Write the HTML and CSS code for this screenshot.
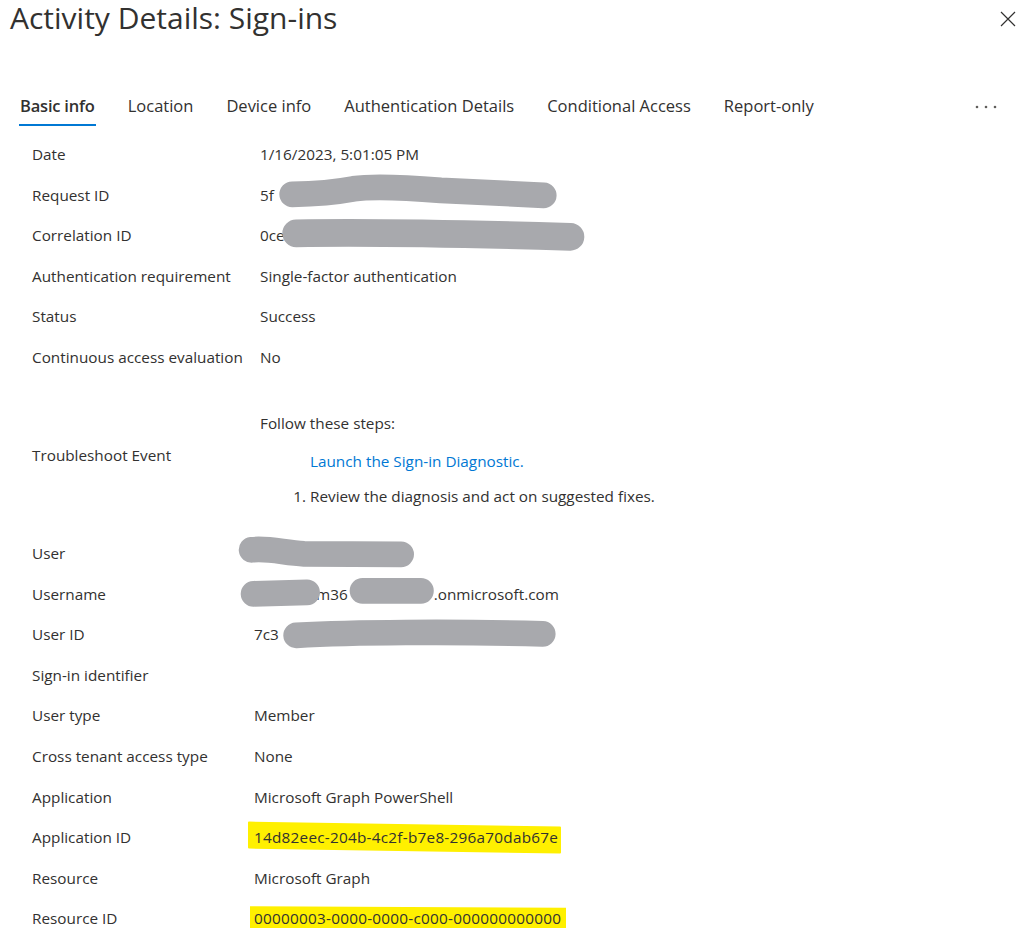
FILE: index.html
```html
<!DOCTYPE html>
<html lang="en">
<head>
<meta charset="utf-8">
<title>Activity Details: Sign-ins</title>
<link rel="stylesheet" href="styles.css">
</head>
<body>
<header class="header">
  <h1 class="title">Activity Details: Sign-ins</h1>
  <button class="close" aria-label="Close">
    <svg width="16" height="16" viewBox="0 0 16 16"><path d="M1 1 L15 15 M15 1 L1 15" stroke="#323130" stroke-width="1.2" fill="none"/></svg>
  </button>
</header>

<nav class="tabs">
  <span class="tab active">Basic info</span>
  <span class="tab">Location</span>
  <span class="tab">Device info</span>
  <span class="tab">Authentication Details</span>
  <span class="tab">Conditional Access</span>
  <span class="tab">Report-only</span>
  <span class="more" aria-label="More">
    <svg width="22" height="4" viewBox="0 0 22 4"><circle cx="2" cy="2" r="1.3" fill="#605e5c"/><circle cx="11" cy="2" r="1.3" fill="#605e5c"/><circle cx="20" cy="2" r="1.3" fill="#605e5c"/></svg>
  </span>
</nav>

<section class="details sec1">
  <div class="row"><div class="label">Date</div><div class="value">1/16/2023, 5:01:05 PM</div></div>
  <div class="row"><div class="label">Request ID</div><div class="value">5f</div>
    <svg class="blob" viewBox="0 0 1028 41"><path d="M290 20.5 C320 20 336 18 352 15 C372 12 402 13.5 440 16.5 L544 21.5"/></svg>
  </div>
  <div class="row"><div class="label">Correlation ID</div><div class="value">0ce</div>
    <svg class="blob wide" viewBox="0 0 1028 41"><path d="M294 18.5 C350 17.5 450 18.5 571 22"/></svg>
  </div>
  <div class="row"><div class="label">Authentication requirement</div><div class="value">Single-factor authentication</div></div>
  <div class="row"><div class="label">Status</div><div class="value">Success</div></div>
  <div class="row"><div class="label">Continuous access evaluation</div><div class="value">No</div></div>
  <div class="row trouble">
    <div class="label">Troubleshoot Event</div>
    <div class="value steps">
      <div class="steps-title">Follow these steps:</div>
      <a class="diag-link" href="#">Launch the Sign-in Diagnostic.</a>
      <ol class="step-list"><li>Review the diagnosis and act on suggested fixes.</li></ol>
    </div>
  </div>
</section>

<section class="details sec2">
  <div class="row"><div class="label">User</div><div class="value"></div>
    <svg class="blob" viewBox="0 0 1028 41"><path d="M249 17 C266 15 282 20 302 21 L400 21.5"/></svg>
  </div>
  <div class="row"><div class="label">Username</div><div class="value"><span class="gap g1"></span>m36<span class="gap g2"></span>.onmicrosoft.com</div>
    <svg class="blob" viewBox="0 0 1028 41"><path d="M251 21 L305 19.5"/><path d="M361 18 L420 18"/></svg>
  </div>
  <div class="row"><div class="label">User ID</div><div class="value">7c3</div>
    <svg class="blob" viewBox="0 0 1028 41"><path d="M294 21.5 C350 18.5 450 17.5 543 20"/></svg>
  </div>
  <div class="row"><div class="label">Sign-in identifier</div><div class="value"></div></div>
  <div class="row"><div class="label">User type</div><div class="value">Member</div></div>
  <div class="row"><div class="label">Cross tenant access type</div><div class="value">None</div></div>
  <div class="row"><div class="label">Application</div><div class="value">Microsoft Graph PowerShell</div></div>
  <div class="row"><div class="label">Application ID</div><div class="value"><span class="hl hl-app">14d82eec-204b-4c2f-b7e8-296a70dab67e</span></div></div>
  <div class="row"><div class="label">Resource</div><div class="value">Microsoft Graph</div></div>
  <div class="row"><div class="label">Resource ID</div><div class="value"><span class="hl hl-res">00000003-0000-0000-c000-000000000000</span></div></div>
</section>
</body>
</html>
```

FILE: styles.css
```css
* { box-sizing: border-box; }

html, body {
  margin: 0;
  padding: 0;
  background: #ffffff;
}

body {
  font-family: "Open Sans", "Noto Sans", "Liberation Sans", sans-serif;
  font-size: 15.3px;
  color: #323130;
  width: 1028px;
  overflow: hidden;
}

.header {
  display: flex;
  justify-content: space-between;
  align-items: flex-start;
  padding: 0 12px 0 10px;
}

.title {
  margin: 0;
  font-size: 30px;
  line-height: 36px;
  font-weight: 500;
  color: #323130;
}

.close {
  margin-top: 11px;
  padding: 0;
  border: 0;
  background: none;
  width: 16px;
  height: 16px;
  display: flex;
}

.tabs {
  display: flex;
  align-items: flex-start;
  gap: 31px;
  margin-top: 58px;
  padding: 0 31px 0 19px;
}

.tab {
  font-size: 16.5px;
  line-height: 24px;
  padding: 0 1px 6px 1px;
  border-bottom: 2px solid transparent;
  color: #323130;
  white-space: nowrap;
}

.tab.active {
  font-weight: 600;
  letter-spacing: -0.2px;
  border-bottom-color: #0078d4;
}

.more {
  margin-left: auto;
  height: 24px;
  display: flex;
  align-items: center;
  padding-top: 1px;
}

.details {
  display: flex;
  flex-direction: column;
}

.row {
  position: relative;
  display: grid;
  align-items: center;
  height: 40.6px;
  padding-left: 32px;
  line-height: 20px;
}

.sec1 .row { grid-template-columns: 228px 1fr; }
.sec2 .row { grid-template-columns: 222px 1fr; }

.details:first-of-type { margin-top: 7.7px; }

.label, .value { white-space: nowrap; }

.row.trouble {
  height: 155.4px;
}

.steps {
  display: flex;
  flex-direction: column;
  align-items: flex-start;
  padding: 36px 0 27px;
  align-self: stretch;
}

.steps-title { line-height: 20px; }

.diag-link {
  margin-top: 18px;
  padding-left: 50px;
  color: #0078d4;
  text-decoration: none;
  line-height: 20px;
}

.step-list {
  margin: 15px 0 0;
  padding-left: 50px;
  line-height: 20px;
}

.gap { display: inline-block; }
.g1 { width: 62px; }
.g2 { width: 86px; }

.blob {
  position: absolute;
  left: 0;
  top: 0;
  width: 1028px;
  height: 40.6px;
  overflow: visible;
  pointer-events: none;
}

.blob path {
  fill: none;
  stroke: #a8a9ad;
  stroke-width: 26;
  stroke-linecap: round;
  stroke-linejoin: round;
}

.blob.wide path { stroke-width: 28; }

.hl {
  position: relative;
  display: inline-block;
  z-index: 0;
  letter-spacing: 0.25px;
}

.hl::before {
  content: "";
  position: absolute;
  z-index: -1;
  background: #fff000;
}

.hl-app::before {
  left: -6px;
  right: -3px;
  top: -3px;
  bottom: -4px;
  transform: skewY(0.9deg);
  border-radius: 1px;
}

.hl-res::before {
  left: -4px;
  right: -5px;
  top: -1px;
  bottom: -6px;
  transform: skewY(0.3deg);
}
```
